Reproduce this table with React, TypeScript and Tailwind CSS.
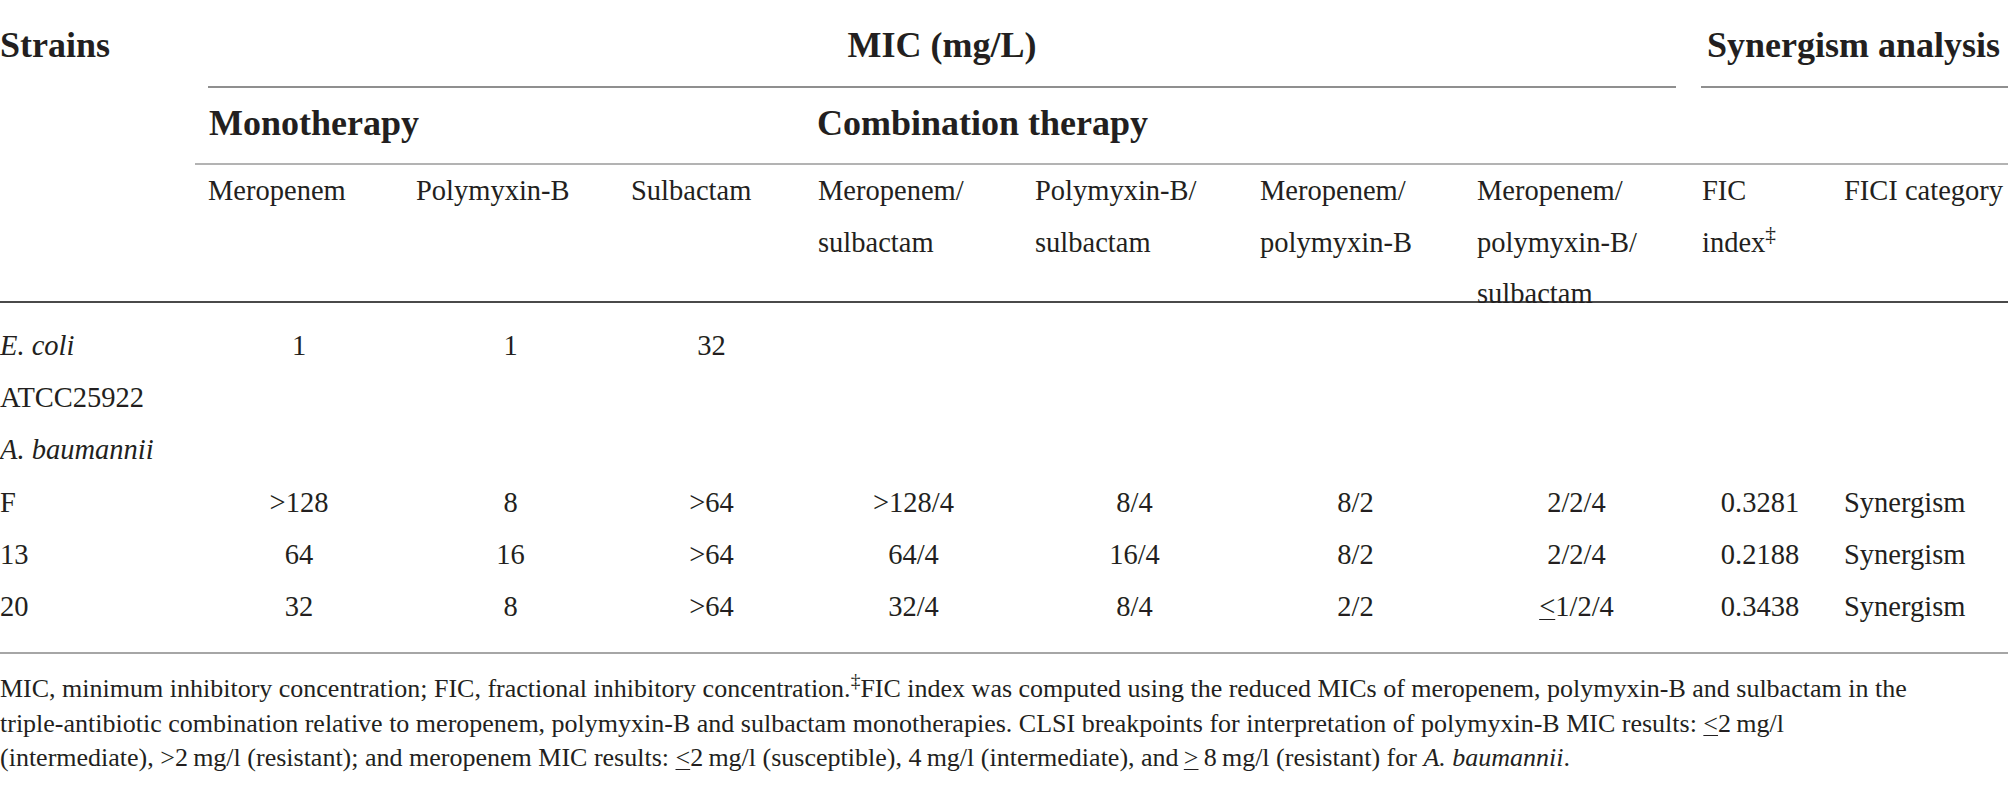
const cols = "grid grid-cols-[195px_208px_215px_187px_217px_225px_217px_225px_142px_1fr]"; // shared column grid

type Row = { strain: React.ReactNode; vals: React.ReactNode[]; cat?: string };

const Le = () => <span className="underline underline-offset-[3px] decoration-1">&lt;</span>; // ≤ drawn as underlined <
const Ge = () => <span className="underline underline-offset-[3px] decoration-1">&gt;</span>; // ≥ drawn as underlined >

const rows: Row[] = [
  { strain: <i>E. coli</i>, vals: ["1", "1", "32", "", "", "", "", ""] },
  { strain: "ATCC25922", vals: ["", "", "", "", "", "", "", ""] },
  { strain: <i>A. baumannii</i>, vals: ["", "", "", "", "", "", "", ""] },
  { strain: "F", vals: [">128", "8", ">64", ">128/4", "8/4", "8/2", "2/2/4", "0.3281"], cat: "Synergism" },
  { strain: "13", vals: ["64", "16", ">64", "64/4", "16/4", "8/2", "2/2/4", "0.2188"], cat: "Synergism" },
  { strain: "20", vals: ["32", "8", ">64", "32/4", "8/4", "2/2", <><Le />1/2/4</>, "0.3438"], cat: "Synergism" },
];

const colHeads: React.ReactNode[] = [
  "Meropenem",
  "Polymyxin-B",
  "Sulbactam",
  <>Meropenem/<br />sulbactam</>,
  <>Polymyxin-B/<br />sulbactam</>,
  <>Meropenem/<br />polymyxin-B</>,
  <>Meropenem/<br />polymyxin-B/<br />sulbactam</>,
  <>FIC<br />index<sup>‡</sup></>,
  "FICI category",
];

const App = () => {
  return (
    <main className="w-[2008px] min-h-[786px] bg-white font-['Liberation_Serif',serif] text-[#231f20] overflow-hidden">
      {/* top header row */}
      <div className="grid grid-cols-[195px_1494px_1fr] text-[36px] font-bold leading-[43px]">
        <div className="h-[88px] pt-[24px] whitespace-nowrap">Strains</div>
        <div className="h-[88px] pt-[24px] mx-[13px] border-b-2 border-[#8f8f8f] text-center">MIC (mg/L)</div>
        <div className="h-[88px] pt-[24px] ml-[12px] pl-[6px] border-b-2 border-[#8f8f8f] whitespace-nowrap">Synergism analysis</div>
      </div>

      {/* therapy group row */}
      <div className="flex">
        <div className="w-[195px] shrink-0"></div>
        <div className="flex-1 grid grid-cols-[610px_884px_1fr] h-[77px] border-b-2 border-[#b3b3b3] text-[36px] font-bold leading-[43px]">
          <div className="pt-[14px] pl-[14px]">Monotherapy</div>
          <div className="pt-[14px] pl-[12px]">Combination therapy</div>
          <div></div>
        </div>
      </div>

      {/* column headers, fixed height so the last line runs over the rule */}
      <div className={`${cols} h-[138px] border-b-2 border-[#4a4a4a] text-[28.5px] leading-[51.5px]`}>
        <div></div>
        {colHeads.map((h, i) => (
          <div key={i} className="pl-[13px] whitespace-nowrap">{h}</div>
        ))}
      </div>

      {/* body rows */}
      <div className="pt-[17px] pb-[19px] border-b-2 border-[#a6a6a6] text-[28.5px] leading-[52.2px]">
        {rows.map((r, i) => (
          <div key={i} className={cols}>
            <div className="whitespace-nowrap">{r.strain}</div>
            {r.vals.map((v, j) => (
              <div key={j} className="text-center whitespace-nowrap">{v}</div>
            ))}
            <div className="pl-[13px]">{r.cat}</div>
          </div>
        ))}
      </div>

      {/* footnote */}
      <p className="pt-[18px] text-[26px] leading-[34.5px] whitespace-nowrap">
        MIC, minimum inhibitory concentration; FIC, fractional inhibitory concentration.<sup>‡</sup>FIC index was computed using the reduced MICs of meropenem, polymyxin-B and sulbactam in the
        <br />
        triple-antibiotic combination relative to meropenem, polymyxin-B and sulbactam monotherapies. CLSI breakpoints for interpretation of polymyxin-B MIC results: <Le />2{"\u2009"}mg/l
        <br />
        (intermediate), &gt;2{"\u2009"}mg/l (resistant); and meropenem MIC results: <Le />2{"\u2009"}mg/l (susceptible), 4{"\u2009"}mg/l (intermediate), and{"\u2009"}<Ge />{"\u2009"}8{"\u2009"}mg/l (resistant) for <i>A. baumannii</i>.
      </p>
    </main>
  );
};

export default App;
